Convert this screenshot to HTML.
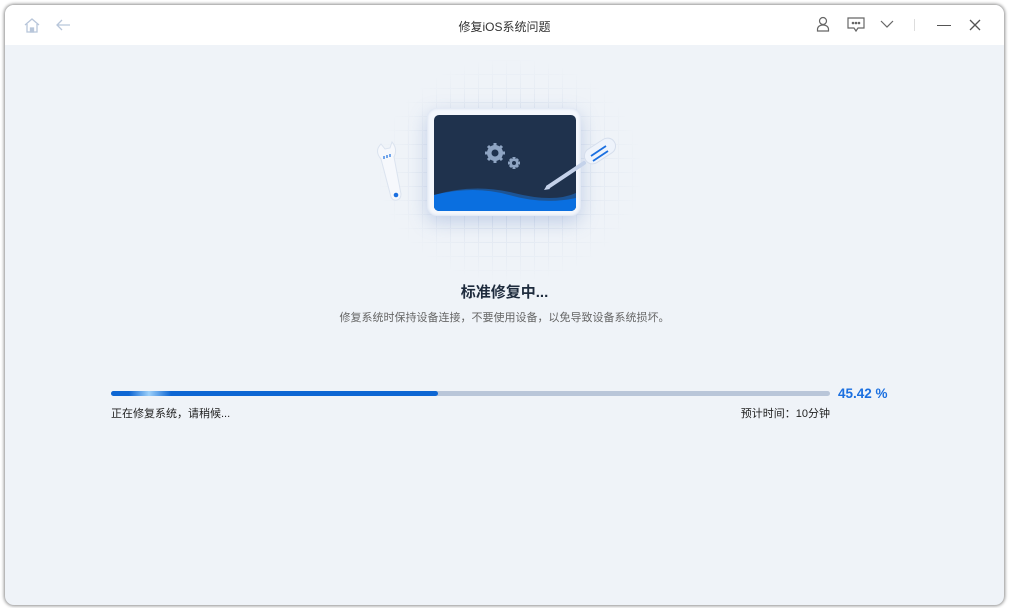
<!DOCTYPE html><html><head><meta charset="utf-8"><style>
body{margin:0;width:1009px;height:608px;background:#fff;font-family:"Liberation Sans","Noto Sans CJK SC",sans-serif;overflow:hidden;position:relative}
.win{position:absolute;left:5px;top:5px;width:999px;height:600px;border-radius:9px;background:#eff3f8;box-shadow:0 0 3px 1px rgba(0,0,0,.45);overflow:hidden}
.hd{height:40px;background:#fff;position:relative}
.t{position:absolute;left:0;right:0;top:13px;text-align:center;font-size:12px;color:#333}
.grid{position:absolute;left:375px;top:55px;width:260px;height:220px;background-image:linear-gradient(#dfe6f0 1px,transparent 1px),linear-gradient(90deg,#dfe6f0 1px,transparent 1px);background-size:14px 14px;-webkit-mask-image:radial-gradient(ellipse at center,#000 35%,transparent 72%)}
</style></head><body>
<div class="win">
<div class="hd">
<svg style="position:absolute;left:18px;top:12px" width="18" height="16" viewBox="0 0 18 16" fill="none" stroke="#b8c6da" stroke-width="1.3"><path d="M2 8L9 2l7 6M4 7v8h10V7"/><rect x="7.5" y="11" width="3" height="4" fill="#b8c6da"/></svg>
<svg style="position:absolute;left:50px;top:13px" width="16" height="14" fill="none" stroke="#b8c6da" stroke-width="1.3"><path d="M15 7H2M7 2L2 7l5 5"/></svg>
<div class="t">修复iOS系统问题</div>
<svg style="position:absolute;left:811px;top:11px" width="14" height="16" fill="none" stroke="#666" stroke-width="1.2"><circle cx="7" cy="5" r="3.5"/><path d="M1.5 15v-1.5c0-3 2.5-4.5 5.5-4.5s5.5 1.5 5.5 4.5V15z"/></svg>
<svg style="position:absolute;left:842px;top:12px" width="18" height="16" fill="none" stroke="#666" stroke-width="1.2"><path d="M1 1h16v10H11l-2 3-2-3H1z"/><circle cx="6" cy="6" r=".7" fill="#666"/><circle cx="9" cy="6" r=".7" fill="#666"/><circle cx="12" cy="6" r=".7" fill="#666"/></svg>
<svg style="position:absolute;left:875px;top:15px" width="14" height="9" fill="none" stroke="#666" stroke-width="1.2"><path d="M1 1l6 6 6-6"/></svg>
<div style="position:absolute;left:909px;top:14px;width:1px;height:12px;background:#ddd"></div>
<div style="position:absolute;left:932px;top:20px;width:14px;height:1.3px;background:#555"></div>
<svg style="position:absolute;left:964px;top:14px" width="12" height="12" stroke="#555" stroke-width="1.3"><path d="M1 1l10 10M11 1L1 11"/></svg>
</div>
<div class="grid"></div>
<div style="position:absolute;left:422px;top:103px;width:154px;height:108px;border-radius:10px;background:#f4f7fc;box-shadow:0 6px 18px rgba(110,140,200,.35),inset 0 0 3px #c9d5ea"></div>
<svg style="position:absolute;left:429px;top:110px" width="142" height="96" viewBox="0 0 142 96"><defs><clipPath id="c"><rect width="142" height="96" rx="5"/></clipPath></defs><g clip-path="url(#c)"><rect width="142" height="96" fill="#1f324d"/><path d="M0 80Q40 68 80 78T142 78V96H0z" fill="#1c5495"/><path d="M0 80Q40 70 75 80T142 83V96H0z" fill="#0a6fe0"/></g>
<g stroke="#8ea4c2" stroke-width="3"><path d="M61 28v20M51 38h20M54 31l14 14M68 31l-14 14M80 42v12M74 48h12M76 44l8 8M84 44l-8 8"/></g>
<g fill="#8ea4c2"><circle cx="61" cy="38" r="8"/><circle cx="80" cy="48" r="4.5"/></g><circle cx="61" cy="38" r="3.5" fill="#1f324d"/><circle cx="80" cy="48" r="2" fill="#1f324d"/></svg>
<svg style="position:absolute;left:535px;top:130px" width="80" height="60"><path d="M8 52L44 28" stroke="#c4d2ea" stroke-width="4" stroke-linecap="round"/><path d="M4 55l6-1-3-4z" fill="#c4d2ea"/><rect x="43" y="8" width="34" height="16" rx="8" transform="rotate(-33 60 16)" fill="#eef3fb" stroke="#d5deec"/><path d="M51 21l15-10M53 26l15-10" stroke="#1a6fe0" stroke-width="1.8"/></svg>
<svg style="position:absolute;left:366px;top:135px" width="40" height="64"><path d="M10 4q-7 7 0 15l10 38q2 4 6 3t4-6L23 17q4-8-2-15l-2 6-5 1z" fill="#f6f8fc" stroke="#dbe3ef"/><circle cx="25" cy="55" r="2.3" fill="#1a6fe0"/><path d="M13 16v3M16 15v3M19 14v3" stroke="#1a6fe0" stroke-width="1.2"/></svg>
<div style="position:absolute;left:0;right:0;top:276px;text-align:center;font-size:15px;font-weight:bold;color:#1e2b3d">标准修复中...</div>
<div style="position:absolute;left:0;right:0;top:304px;text-align:center;font-size:11px;color:#666">修复系统时保持设备连接，不要使用设备，以免导致设备系统损坏。</div>
<div style="position:absolute;left:106px;top:386px;width:719px;height:5px;border-radius:3px;background:#b9c6d9"></div>
<div style="position:absolute;left:106px;top:386px;width:327px;height:5px;border-radius:3px;background:linear-gradient(90deg,#0d66d3 0,#0d66d3 18px,#9dd0fa 38px,#0d66d3 60px,#0d66d3)"></div>
<div style="position:absolute;left:833px;top:381px;font-size:13.5px;font-weight:bold;color:#1a6fe0">45.42 %</div>
<div style="position:absolute;left:106px;top:400px;font-size:11px;color:#222">正在修复系统，请稍候...</div>
<div style="position:absolute;right:174px;top:400px;font-size:11px;color:#222">预计时间：10分钟</div>
</div>
</body></html>
